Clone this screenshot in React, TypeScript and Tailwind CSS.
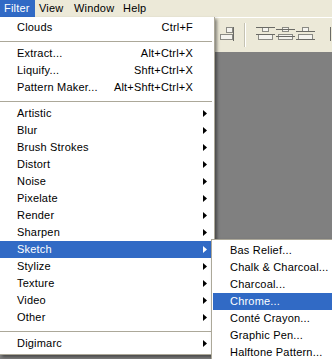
import React from 'react';

type Item =
  | { kind: 'item'; label: string; shortcut?: string; sub?: boolean; active?: boolean }
  | { kind: 'sep' };

const filterMenu: Item[] = [
  { kind: 'item', label: 'Clouds', shortcut: 'Ctrl+F' },
  { kind: 'sep' },
  { kind: 'item', label: 'Extract...', shortcut: 'Alt+Ctrl+X' },
  { kind: 'item', label: 'Liquify...', shortcut: 'Shft+Ctrl+X' },
  { kind: 'item', label: 'Pattern Maker...', shortcut: 'Alt+Shft+Ctrl+X' },
  { kind: 'sep' },
  { kind: 'item', label: 'Artistic', sub: true },
  { kind: 'item', label: 'Blur', sub: true },
  { kind: 'item', label: 'Brush Strokes', sub: true },
  { kind: 'item', label: 'Distort', sub: true },
  { kind: 'item', label: 'Noise', sub: true },
  { kind: 'item', label: 'Pixelate', sub: true },
  { kind: 'item', label: 'Render', sub: true },
  { kind: 'item', label: 'Sharpen', sub: true },
  { kind: 'item', label: 'Sketch', sub: true, active: true },
  { kind: 'item', label: 'Stylize', sub: true },
  { kind: 'item', label: 'Texture', sub: true },
  { kind: 'item', label: 'Video', sub: true },
  { kind: 'item', label: 'Other', sub: true },
  { kind: 'sep' },
  { kind: 'item', label: 'Digimarc', sub: true },
];

const sketchMenu = [
  'Bas Relief...',
  'Chalk & Charcoal...',
  'Charcoal...',
  'Chrome...',
  'Conté Crayon...',
  'Graphic Pen...',
  'Halftone Pattern...',
];

function Arrow({ white }: { white?: boolean }) {
  return (
    <svg width="4" height="7" viewBox="0 0 4 7">
      <polygon points="0,0 4,3.5 0,7" fill={white ? '#fff' : '#000'} />
    </svg>
  );
}

function Rect({ x, y, w, h }: { x: number; y: number; w: number; h: number }) {
  return <rect x={x + 0.5} y={y + 0.5} width={w} height={h} fill="#f4f3ee" stroke="#8a8a84" />;
}

function AlignRightIcon() {
  return (
    <svg width="16" height="14" viewBox="0 0 16 14">
      <Rect x={7} y={0} w={6} h={5} />
      <Rect x={1} y={7} w={12} h={5} />
      <line x1="14.5" y1="0" x2="14.5" y2="14" stroke="#6b6b66" />
    </svg>
  );
}

function DistributeIcon({ mode }: { mode: 'top' | 'mid' | 'bot' }) {
  const l1 = mode === 'top' ? 0.5 : mode === 'mid' ? 2.5 : 4.5;
  const l2 = mode === 'top' ? 7.5 : mode === 'mid' ? 9.5 : 12.5;
  return (
    <svg width="19" height="14" viewBox="0 0 19 14">
      <Rect x={6} y={0} w={6} h={4} />
      <Rect x={2} y={7} w={14} h={5} />
      <line x1="0" y1={l1} x2="19" y2={l1} stroke="#6b6b66" />
      <line x1="0" y1={l2} x2="19" y2={l2} stroke="#6b6b66" />
    </svg>
  );
}

export default function App() {
  return (
    <div className="w-[332px] h-[359px] overflow-hidden relative bg-[#808080] font-['Liberation_Sans',Arial,sans-serif] text-[11px] tracking-[0.2px] text-black select-none">
      {/* menu bar */}
      <div className="h-[17px] bg-[#ece9d8] flex items-stretch leading-[17px]">
        <div className="px-[4px] w-[35px] bg-[#316ac5] text-white">Filter</div>
        <div className="pl-[4px] w-[35px]">View</div>
        <div className="pl-[4px] w-[49px]">Window</div>
        <div className="pl-[4px]">Help</div>
        <div className="flex-1" />
      </div>

      <div className="flex">
        {/* Filter menu */}
        <div className="relative z-10 w-[215px] shrink-0 bg-white border-r border-b border-[#aca899] pt-[2px] pb-[2px] shadow-[2px_2px_3px_rgba(0,0,0,0.45)]">
          {filterMenu.map((it, i) =>
            it.kind === 'sep' ? (
              <div key={i} className="h-[9px] pt-[5px] pr-[2px]">
                <div className="h-px bg-[#aca899]" />
              </div>
            ) : (
              <div
                key={i}
                className={
                  'mr-[3px] h-[17px] leading-[17px] grid grid-cols-[1fr_auto_18px] items-center ' +
                  (it.active ? 'bg-[#316ac5] text-white' : '')
                }
              >
                <span className="pl-[17px] whitespace-nowrap">{it.label}</span>
                <span className="whitespace-nowrap">{it.shortcut ?? ''}</span>
                <span className="pl-[10px] flex items-center">{it.sub && <Arrow white={it.active} />}</span>
              </div>
            )
          )}
        </div>

        {/* workspace */}
        <div className="flex-1 min-w-0 overflow-hidden flex flex-col">
          <div className="h-[35px] bg-[#ece9d8] border-t border-white flex items-start pt-[9px]">
            <div className="ml-[4px] shrink-0">
              <AlignRightIcon />
            </div>
            <div className="ml-[9px] mt-[-4px] shrink-0 w-[2px] h-[24px] bg-[#c5c2b2] border-r border-white" />
            <div className="ml-[10px] shrink-0">
              <DistributeIcon mode="top" />
            </div>
            <div className="ml-[1px] shrink-0">
              <DistributeIcon mode="mid" />
            </div>
            <div className="ml-[1px] shrink-0">
              <DistributeIcon mode="bot" />
            </div>
            <div className="ml-[15px] shrink-0 flex items-start">
              <div className="w-px h-[14px] bg-[#6b6b66]" />
              <div className="ml-[1px] mt-[4px] w-[6px] h-[6px] bg-[#f4f3ee] border border-[#8a8a84]" />
            </div>
          </div>
        </div>
      </div>

      {/* Sketch submenu */}
      <div className="absolute z-20 left-[211px] top-[239px] w-[140px] bg-white border border-[#aca899] pt-[2px] pl-[1px] shadow-[2px_2px_3px_rgba(0,0,0,0.45)]">
        {sketchMenu.map((s) => (
          <div
            key={s}
            className={
              'h-[17px] leading-[17px] pl-[17px] whitespace-nowrap ' +
              (s === 'Chrome...' ? 'bg-[#316ac5] text-white' : '')
            }
          >
            {s}
          </div>
        ))}
      </div>
    </div>
  );
}
